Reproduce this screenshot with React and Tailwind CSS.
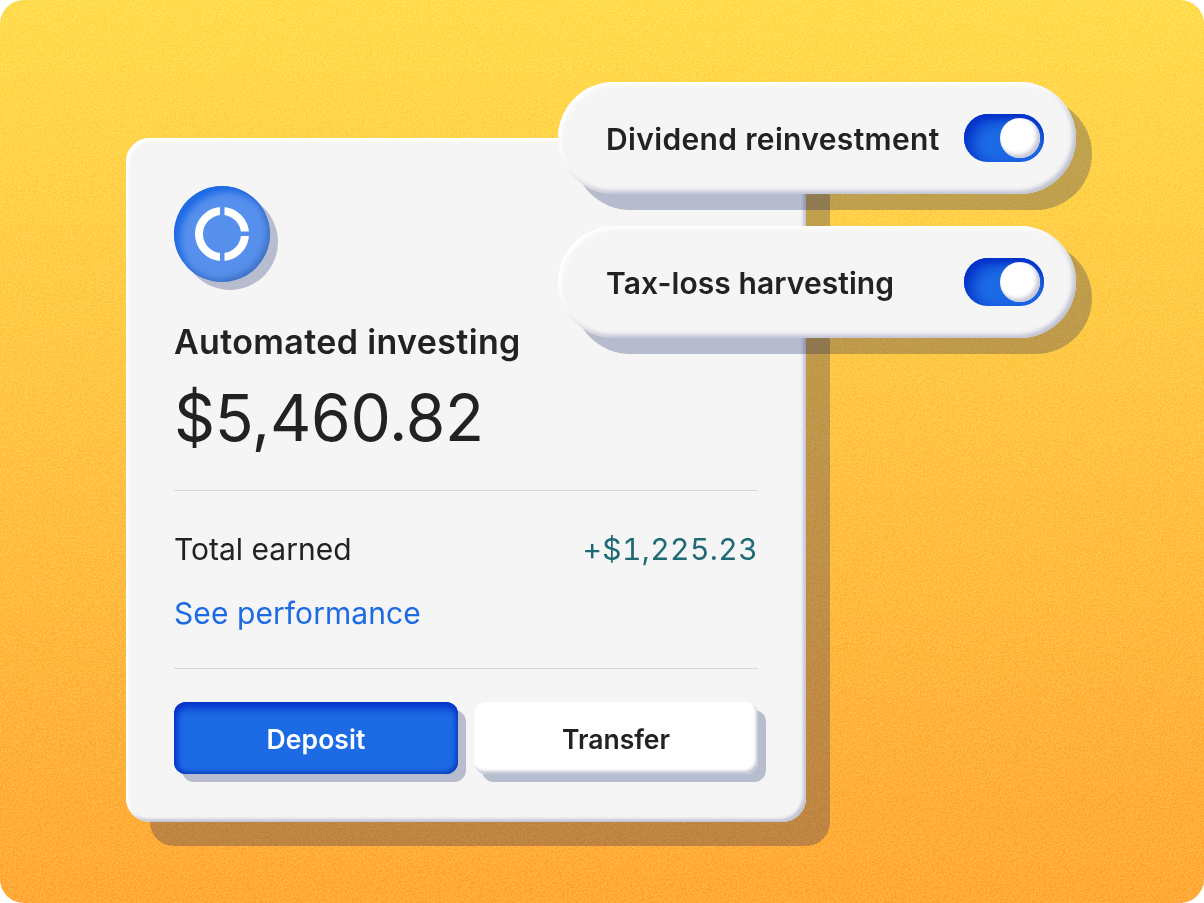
import React from "react";

const font = { fontFamily: '"Inter", "Liberation Sans", sans-serif' };

function Noise() {
  return (
    <svg className="absolute inset-0 w-full h-full opacity-[0.15] mix-blend-soft-light" aria-hidden="true">
      <filter id="grain">
        <feTurbulence type="fractalNoise" baseFrequency="0.55" numOctaves="2" stitchTiles="stitch" />
        <feColorMatrix type="saturate" values="0" />
        <feComponentTransfer>
          <feFuncR type="discrete" tableValues="0 1" />
          <feFuncG type="discrete" tableValues="0 1" />
          <feFuncB type="discrete" tableValues="0 1" />
          <feFuncA type="discrete" tableValues="1" />
        </feComponentTransfer>
      </filter>
      <rect width="100%" height="100%" filter="url(#grain)" />
    </svg>
  );
}

function Logo() {
  return (
    <div className="w-24 h-24 rounded-full bg-[#5790ec] flex items-center justify-center shadow-[8px_8px_0_0_#b8bccf,inset_6px_6px_7px_0_#1d6ae5,inset_-3px_-3px_6px_0_#3f70c4]">
      <svg width="54" height="54" viewBox="0 0 54 54">
        <mask id="ring">
          <rect width="54" height="54" fill="white" />
          <rect x="25" y="0" width="4.5" height="54" fill="black" />
          <rect x="27" y="24.5" width="27" height="4.5" fill="black" />
        </mask>
        <circle cx="27" cy="27" r="23" fill="none" stroke="white" strokeWidth="8" mask="url(#ring)" />
      </svg>
    </div>
  );
}

function Toggle() {
  return (
    <div className="w-20 h-12 rounded-full bg-[#1d6ae5] flex items-center justify-end pr-1 shadow-[inset_8px_6px_14px_0_#0532c8,inset_0_4px_4px_0_#0532c8]">
      <div className="w-10 h-10 rounded-full bg-white shadow-[inset_-3px_-3px_4px_0_#c2c4d2]" />
    </div>
  );
}

function Pill({ label, top, tracking }) {
  return (
    <div className={`absolute left-[558px] ${top} w-[518px] h-[112px] rounded-[56px] bg-[#f5f5f5] flex items-center justify-between pl-12 pr-8 shadow-[16px_16px_0_0_rgba(1,17,93,0.25),inset_3px_3px_4px_0_#ffffff,inset_-3px_-3px_4px_0_#bcbfd0]`}>
      <span className={`pt-[2px] text-[30px] leading-none font-semibold ${tracking} text-[#222222]`}>{label}</span>
      <Toggle />
    </div>
  );
}

export default function App() {
  return (
    <div className="w-[1204px] h-[903px] bg-white" style={font}>
      <div className="relative isolate w-full h-full rounded-3xl overflow-hidden bg-gradient-to-b from-[#ffdd4d] to-[#ffaa35] pl-[126px] pt-[138px]">
        <Noise />
        <div className="relative w-[680px] h-[684px] rounded-3xl bg-[#f5f5f5] p-12 shadow-[24px_24px_0_0_rgba(1,17,93,0.25),inset_3px_3px_3px_0_#ffffff,inset_-3px_-3px_3px_0_#c4c6d6]">
          <Logo />
          <div className="mt-[38px] text-[34px] leading-[44px] font-semibold tracking-[0.36px] text-[#222222]">Automated investing</div>
          <div className="mt-[16px] text-[64px] leading-[76px] font-normal tracking-[-0.25px] text-[#222222]">$5,460.82</div>
          <div className="mt-[34px] h-px bg-[#d6d6d6]" />
          <div className="mt-[40px] flex justify-between text-[30px] leading-9 text-[#222222]">
            <span>Total earned</span>
            <span className="text-[#1f6b75] tabular-nums tracking-[0.4px]">+$1,225.23</span>
          </div>
          <div className="mt-7 text-[30px] leading-9 tracking-[0.07px] text-[#1d6ae5]">See performance</div>
          <div className="mt-[37px] h-px bg-[#d6d6d6]" />
          <div className="mt-[33px] flex gap-4">
            <button className="w-[284px] h-[72px] pt-[3px] rounded-xl bg-[#1d6ae5] text-white text-[26.5px] font-semibold tracking-[0.1px] shadow-[8px_8px_0_0_#b8bccf,inset_0_8px_8px_-2px_#0532c8,inset_5px_0_6px_-2px_#0532c8,inset_-3px_-3px_4px_-1px_#0d47b8]">Deposit</button>
            <button className="w-[284px] h-[72px] pt-[3px] rounded-xl bg-white text-[#222222] text-[26.5px] font-semibold shadow-[8px_8px_0_0_#b8bccf,inset_-2px_-3px_3px_0_#c4c6d6]">Transfer</button>
          </div>
        </div>
        <Pill label="Dividend reinvestment" top="top-[82px]" tracking="tracking-[0.35px]" />
        <Pill label="Tax-loss harvesting" top="top-[226px]" tracking="tracking-[0.08px]" />
      </div>
    </div>
  );
}
